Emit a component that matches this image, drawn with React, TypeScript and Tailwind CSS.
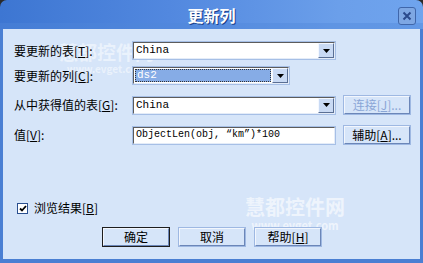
import React from "react";

const cjk = { fontFamily: '"Noto Sans CJK SC", "Noto Sans", sans-serif' };
const mono = { fontFamily: '"Liberation Mono", "DejaVu Sans Mono", monospace' };

function DropBtn() {
  return (
    <div className="flex h-[15px] w-[16px] items-center justify-center border border-t-[#f4f8ff] border-l-[#f4f8ff] border-r-[#5a6f94] border-b-[#5a6f94] bg-[#c9daf4]">
      <svg width="7" height="4" viewBox="0 0 7 4">
        <path d="M0 0h7L3.5 4z" fill="#000" />
      </svg>
    </div>
  );
}

function Sunken({ w, children }: { w: string; children: React.ReactNode }) {
  return (
    <div className={`${w} h-[19px] border border-[#a6bfe6]`}>
      <div className="flex h-full w-full items-center border border-t-[#5c5c5c] border-l-[#5c5c5c] border-r-[#e4ecf8] border-b-[#e4ecf8] bg-white">
        {children}
      </div>
    </div>
  );
}

function Btn({ children, def, disabled, w = "w-[68px]" }: { children: React.ReactNode; def?: boolean; disabled?: boolean; w?: string }) {
  return (
    <div className={`${w} h-[20px] ${def ? "border border-[#1e1e1e]" : "border border-[#9eb8e2]"}`}>
      <div className="flex h-full w-full items-center justify-center border border-t-[#f2f6fd] border-l-[#f2f6fd] border-r-[#6b86b8] border-b-[#6b86b8] bg-[#d6e5f9] text-[12px] leading-none">
        <span className={disabled ? "text-[#8aa6d6]" : "text-black"} style={cjk}>
          {children}
        </span>
      </div>
    </div>
  );
}

export default function App() {
  return (
    <div className="relative flex h-[263px] w-[423px] flex-col overflow-hidden bg-[#2a2a2a]" style={cjk}>
      {/* title bar */}
      <div className="relative flex h-[29px] items-center justify-center rounded-t-[7px] bg-[linear-gradient(to_right,#3d76d2,#5288df_40%,#6b9fea_80%,#6fa4ee)]">
        <div className="absolute inset-x-0 bottom-0 h-[6px] bg-[#4f86da]/40" />
        <span className="relative text-[16px] font-bold leading-none text-white [text-shadow:1px_1px_0_#1b3f8a]">更新列</span>
        <div className="absolute right-[7px] top-[7px] flex h-[18px] w-[18px] items-center justify-center rounded-[3px] border border-[#3f66aa] bg-[#7ea7e3]">
          <svg width="10" height="10" viewBox="0 0 10 10">
            <path d="M1.5 1.5l7 7M8.5 1.5l-7 7" stroke="#2b4a8c" strokeWidth="2" />
          </svg>
        </div>
      </div>

      {/* body */}
      <div className="relative flex flex-1 flex-col border-x-[3px] border-b-[4px] border-[#4a7fd3] bg-[#d6e5f9] pl-[11px] text-[12px] leading-none">
        {/* watermark behind the fields */}
        <div className="pointer-events-none absolute left-[56px] top-[13px] flex flex-col items-center text-white/50">
          <span className="text-[19px] font-bold leading-none">慧都控件网</span>
          <span className="mt-[3px] text-[10px] font-bold leading-none">www.evget.com</span>
        </div>

        <div className="relative mt-[12px] flex items-center">
          <span className="w-[118px]">要更新的表[<u>T</u>]:</span>
          <Sunken w="w-[204px]">
            <span className="flex-1 pl-[2px] text-[11px]" style={mono}>China</span>
            <DropBtn />
          </Sunken>
        </div>

        <div className="relative mt-[6px] flex items-center">
          <span className="w-[118px]">要更新的列[<u>C</u>]:</span>
          <Sunken w="w-[158px]">
            <div className="mx-[1px] flex h-[13px] flex-1 items-center border border-dotted border-[#333] bg-[#86ace6] pl-[1px] text-[11px] text-white" style={mono}>
              ds2
            </div>
            <DropBtn />
          </Sunken>
        </div>

        <div className="relative mt-[10px] flex items-center">
          <span className="w-[118px]">从中获得值的表[<u>G</u>]:</span>
          <Sunken w="w-[204px]">
            <span className="flex-1 pl-[2px] text-[11px]" style={mono}>China</span>
            <DropBtn />
          </Sunken>
          <div className="ml-[7px]">
            <Btn disabled>连接[<u>J</u>]...</Btn>
          </div>
        </div>

        <div className="relative mt-[10px] flex items-center">
          <span className="w-[118px]">值[<u>V</u>]:</span>
          <Sunken w="w-[204px]">
            <span className="flex-1 pl-[2px] text-[10px]" style={mono}>ObjectLen(obj, “km”)*100</span>
          </Sunken>
          <div className="ml-[7px]">
            <Btn>辅助[<u>A</u>]...</Btn>
          </div>
        </div>

        <div className="ml-[3px] mt-[57px] flex items-center">
          <div className="flex h-[11px] w-[11px] items-center justify-center border border-[#2a4f8f] bg-white">
            <svg width="8" height="7" viewBox="0 0 8 7">
              <path d="M1 3.5l2 2L7 1" stroke="#000" strokeWidth="1.8" fill="none" />
            </svg>
          </div>
          <span className="ml-[6px]">浏览结果[<u>B</u>]</span>
        </div>

        {/* watermark over the lower area */}
        <div className="pointer-events-none absolute left-[242px] top-[168px] flex flex-col items-center text-white/60">
          <span className="text-[20px] font-bold leading-none">慧都控件网</span>
          <span className="mt-[3px] text-[11px] font-bold leading-none">www.evget.com</span>
        </div>

        <div className="relative ml-[88px] mt-[13px] flex gap-[8px]">
          <Btn def>确定</Btn>
          <Btn>取消</Btn>
          <Btn>帮助[<u>H</u>]</Btn>
        </div>
      </div>
    </div>
  );
}
